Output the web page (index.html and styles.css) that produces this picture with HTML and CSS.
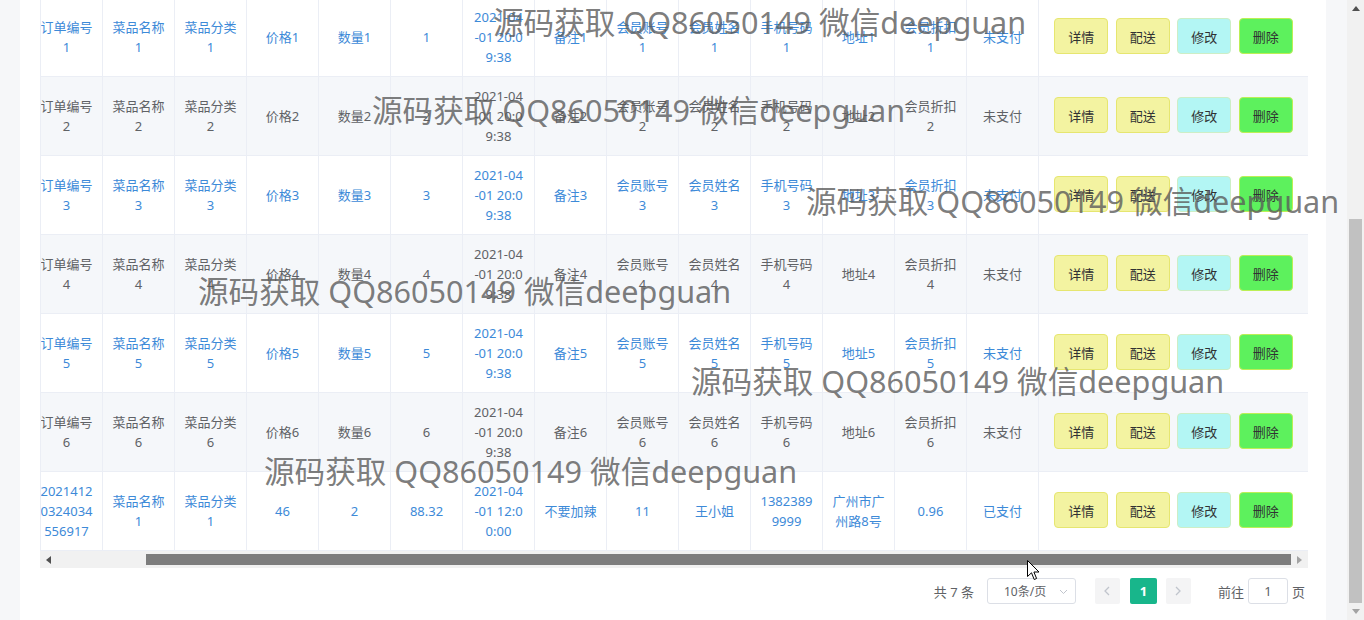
FILE: index.html
```html
<!DOCTYPE html>
<html lang="zh-CN">
<head>
<meta charset="utf-8">
<title>订单管理</title>
<link rel="stylesheet" href="styles.css">
</head>
<body>
<div class="page">
  <div class="main">
    <div class="card">
      <div class="table-clip">
        <div class="table">
          <div class="row link">
            <div class="cell">订单编号1</div><div class="cell">菜品名称1</div><div class="cell">菜品分类1</div><div class="cell">价格1</div><div class="cell">数量1</div><div class="cell">1</div><div class="cell">2021-04-01 20:09:38</div><div class="cell">备注1</div><div class="cell">会员账号1</div><div class="cell">会员姓名1</div><div class="cell">手机号码1</div><div class="cell">地址1</div><div class="cell">会员折扣1</div><div class="cell">未支付</div>
            <div class="cell ops"><button class="btn btn-yellow">详情</button><button class="btn btn-yellow">配送</button><button class="btn btn-cyan">修改</button><button class="btn btn-green">删除</button></div>
          </div>
          <div class="row alt">
            <div class="cell">订单编号2</div><div class="cell">菜品名称2</div><div class="cell">菜品分类2</div><div class="cell">价格2</div><div class="cell">数量2</div><div class="cell">2</div><div class="cell">2021-04-01 20:09:38</div><div class="cell">备注2</div><div class="cell">会员账号2</div><div class="cell">会员姓名2</div><div class="cell">手机号码2</div><div class="cell">地址2</div><div class="cell">会员折扣2</div><div class="cell">未支付</div>
            <div class="cell ops"><button class="btn btn-yellow">详情</button><button class="btn btn-yellow">配送</button><button class="btn btn-cyan">修改</button><button class="btn btn-green">删除</button></div>
          </div>
          <div class="row link">
            <div class="cell">订单编号3</div><div class="cell">菜品名称3</div><div class="cell">菜品分类3</div><div class="cell">价格3</div><div class="cell">数量3</div><div class="cell">3</div><div class="cell">2021-04-01 20:09:38</div><div class="cell">备注3</div><div class="cell">会员账号3</div><div class="cell">会员姓名3</div><div class="cell">手机号码3</div><div class="cell">地址3</div><div class="cell">会员折扣3</div><div class="cell">未支付</div>
            <div class="cell ops"><button class="btn btn-yellow">详情</button><button class="btn btn-yellow">配送</button><button class="btn btn-cyan">修改</button><button class="btn btn-green">删除</button></div>
          </div>
          <div class="row alt">
            <div class="cell">订单编号4</div><div class="cell">菜品名称4</div><div class="cell">菜品分类4</div><div class="cell">价格4</div><div class="cell">数量4</div><div class="cell">4</div><div class="cell">2021-04-01 20:09:38</div><div class="cell">备注4</div><div class="cell">会员账号4</div><div class="cell">会员姓名4</div><div class="cell">手机号码4</div><div class="cell">地址4</div><div class="cell">会员折扣4</div><div class="cell">未支付</div>
            <div class="cell ops"><button class="btn btn-yellow">详情</button><button class="btn btn-yellow">配送</button><button class="btn btn-cyan">修改</button><button class="btn btn-green">删除</button></div>
          </div>
          <div class="row link">
            <div class="cell">订单编号5</div><div class="cell">菜品名称5</div><div class="cell">菜品分类5</div><div class="cell">价格5</div><div class="cell">数量5</div><div class="cell">5</div><div class="cell">2021-04-01 20:09:38</div><div class="cell">备注5</div><div class="cell">会员账号5</div><div class="cell">会员姓名5</div><div class="cell">手机号码5</div><div class="cell">地址5</div><div class="cell">会员折扣5</div><div class="cell">未支付</div>
            <div class="cell ops"><button class="btn btn-yellow">详情</button><button class="btn btn-yellow">配送</button><button class="btn btn-cyan">修改</button><button class="btn btn-green">删除</button></div>
          </div>
          <div class="row alt">
            <div class="cell">订单编号6</div><div class="cell">菜品名称6</div><div class="cell">菜品分类6</div><div class="cell">价格6</div><div class="cell">数量6</div><div class="cell">6</div><div class="cell">2021-04-01 20:09:38</div><div class="cell">备注6</div><div class="cell">会员账号6</div><div class="cell">会员姓名6</div><div class="cell">手机号码6</div><div class="cell">地址6</div><div class="cell">会员折扣6</div><div class="cell">未支付</div>
            <div class="cell ops"><button class="btn btn-yellow">详情</button><button class="btn btn-yellow">配送</button><button class="btn btn-cyan">修改</button><button class="btn btn-green">删除</button></div>
          </div>
          <div class="row link">
            <div class="cell">20214120324034556917</div><div class="cell">菜品名称1</div><div class="cell">菜品分类1</div><div class="cell">46</div><div class="cell">2</div><div class="cell">88.32</div><div class="cell">2021-04-01 12:00:00</div><div class="cell">不要加辣</div><div class="cell">11</div><div class="cell">王小姐</div><div class="cell">13823899999</div><div class="cell">广州市广州路8号</div><div class="cell">0.96</div><div class="cell">已支付</div>
            <div class="cell ops"><button class="btn btn-yellow">详情</button><button class="btn btn-yellow">配送</button><button class="btn btn-cyan">修改</button><button class="btn btn-green">删除</button></div>
          </div>
        </div>
      </div>
      <div class="hscroll">
        <span class="sb-btn"><svg width="5" height="8" viewBox="0 0 5 8"><polygon points="5,0 5,8 0,4" fill="#505050"/></svg></span>
        <span class="h-thumb" style="width:1145px"></span>
        <span class="sb-btn"><svg width="5" height="8" viewBox="0 0 5 8"><polygon points="0,0 0,8 5,4" fill="#a3a3a3"/></svg></span>
      </div>
      <div class="pagination">
        <span class="total">共 7 条</span>
        <span class="sizes">10条/页<svg class="sel-arrow" width="9" height="6" viewBox="0 0 9 6"><polyline points="1,1 4.5,4.5 8,1" fill="none" stroke="#c0c4cc" stroke-width="1"/></svg></span>
        <span class="pbtn"><svg width="6" height="10" viewBox="0 0 6 10"><polyline points="5,1 1,5 5,9" fill="none" stroke="#c0c4cc" stroke-width="1.3"/></svg></span>
        <span class="pager active">1</span>
        <span class="pbtn"><svg width="6" height="10" viewBox="0 0 6 10"><polyline points="1,1 5,5 1,9" fill="none" stroke="#c0c4cc" stroke-width="1.3"/></svg></span>
        <span class="jump">前往</span>
        <span class="jump-input">1</span>
        <span class="jump-tail">页</span>
      </div>
    </div>
  </div>
  <div class="vscroll">
    <span class="v-btn"><svg width="8" height="5" viewBox="0 0 8 5"><polygon points="0,5 8,5 4,0" fill="#505050"/></svg></span>
    <span class="v-thumb" style="height:384px"></span>
    <span class="v-btn"><svg width="8" height="5" viewBox="0 0 8 5"><polygon points="0,0 8,0 4,5" fill="#a3a3a3"/></svg></span>
  </div>

  <div class="wm wm1">源码获取 QQ86050149 微信deepguan</div>
  <div class="wm wm2">源码获取 QQ86050149 微信deepguan</div>
  <div class="wm wm3">源码获取 QQ86050149 微信deepguan</div>
  <div class="wm wm4">源码获取 QQ86050149 微信deepguan</div>
  <div class="wm wm5">源码获取 QQ86050149 微信deepguan</div>
  <div class="wm wm6">源码获取 QQ86050149 微信deepguan</div>

  <svg class="cursor" width="13" height="21" viewBox="0 0 13 21"><path d="M0.5 0.5 L0.5 16.5 L4.5 12.8 L7.2 19.5 L9.6 18.5 L6.9 12 L12 12 Z" fill="#fff" stroke="#000" stroke-width="1" stroke-linejoin="round"/></svg>
</div>
</body>
</html>
```
FILE: styles.css
```css
html, body {
  margin: 0;
  padding: 0;
}

body {
  overflow: hidden;
  font-family: "Noto Sans", "Noto Sans CJK SC", sans-serif;
  background: #f6f7f9;
}

.page {
  position: relative;
  display: flex;
  width: 1364px;
  height: 620px;
  overflow: hidden;
}

.main {
  flex: 1;
  display: flex;
  background: #f6f7f9;
  padding: 0 21px 0 20px;
}

.card {
  flex: 1;
  background: #ffffff;
  padding: 0 18px 0 20px;
}

/* table, scrolled horizontally to the end and vertically below its header */
.table-clip {
  margin-top: -2px;
  border-left: 1px solid #ebeef5;
  overflow: hidden;
}

.table {
  width: 1277px;
  margin-left: -10px;
}

.row {
  display: grid;
  grid-template-columns: repeat(14, 72px) 269px;
  height: 79px;
  box-sizing: border-box;
  border-bottom: 1px solid #ebeef5;
  color: #606266;
  background: #ffffff;
}

.row.alt {
  background: #f5f7fa;
}

.row.link {
  color: #3d8ad8;
}

.cell {
  display: flex;
  align-items: center;
  justify-content: center;
  min-width: 0;
  box-sizing: border-box;
  padding: 0 9.25px;
  border-right: 1px solid #ebeef5;
  font-size: 13px;
  line-height: 20px;
  text-align: center;
  word-break: break-all;
}

.cell.ops {
  border-right: none;
  padding: 0 0 2px 0;
  gap: 7.5px;
}

.btn {
  width: 54px;
  height: 36px;
  box-sizing: border-box;
  padding: 0;
  border: 1px solid;
  border-radius: 4px;
  font-family: "Noto Sans", "Noto Sans CJK SC", sans-serif;
  font-size: 13px;
  color: #303133;
}

.btn-yellow {
  background: #f3f3a1;
  border-color: #e6e670;
}

.btn-cyan {
  background: #b3f6f4;
  border-color: #cdeec6;
}

.btn-green {
  background: #5df15d;
  border-color: #bcef55;
}

/* horizontal scrollbar of the table */
.hscroll {
  display: flex;
  align-items: center;
  height: 17px;
  background: #f1f1f1;
}

.sb-btn {
  width: 17px;
  height: 17px;
  display: flex;
  align-items: center;
  justify-content: center;
  flex: none;
}

.h-thumb {
  margin-left: auto;
  height: 11px;
  background: #7d7d7d;
}

/* pagination */
.pagination {
  display: flex;
  justify-content: flex-end;
  align-items: center;
  height: 26px;
  margin-top: 10px;
  padding-right: 3px;
  font-size: 13px;
  color: #606266;
}

.total {
  margin-right: 13px;
}

.sizes {
  position: relative;
  width: 89px;
  height: 26px;
  box-sizing: border-box;
  border: 1px solid #dcdfe6;
  border-radius: 3px;
  display: flex;
  align-items: center;
  padding-left: 16px;
  font-size: 12px;
  color: #606266;
  margin-right: 19px;
}

.sel-arrow {
  position: absolute;
  right: 7px;
  top: 10px;
}

.pbtn {
  width: 25px;
  height: 26px;
  background: #f4f4f5;
  border-radius: 2px;
  display: flex;
  align-items: center;
  justify-content: center;
}

.pager {
  width: 27px;
  height: 26px;
  border-radius: 2px;
  display: flex;
  align-items: center;
  justify-content: center;
  margin: 0 9px 0 10px;
  font-weight: 700;
}

.pager.active {
  background: #18b68b;
  color: #ffffff;
}

.jump {
  margin-left: 27px;
}

.jump-input {
  width: 40px;
  height: 26px;
  box-sizing: border-box;
  margin-left: 4px;
  border: 1px solid #dcdfe6;
  border-radius: 3px;
  display: flex;
  align-items: center;
  justify-content: center;
  color: #606266;
}

.jump-tail {
  margin-left: 4px;
}

/* window scrollbar */
.vscroll {
  width: 17px;
  flex: none;
  display: flex;
  flex-direction: column;
  align-items: center;
  background: #f1f1f1;
}

.v-btn {
  width: 17px;
  height: 17px;
  flex: none;
  display: flex;
  align-items: center;
  justify-content: center;
}

.v-thumb {
  margin-top: auto;
  width: 13px;
  background: #c1c1c1;
}

/* watermark overlay */
.wm {
  position: absolute;
  white-space: nowrap;
  font-family: "Noto Sans", "Noto Sans CJK SC", sans-serif;
  font-size: 30.6px;
  line-height: 30px;
  color: rgba(90, 90, 90, 0.8);
  pointer-events: none;
}

.wm1 { left: 493px; top: 7px; }
.wm2 { left: 372px; top: 95px; }
.wm3 { left: 806px; top: 186px; }
.wm4 { left: 198px; top: 276px; }
.wm5 { left: 691px; top: 366px; }
.wm6 { left: 264px; top: 456px; }

.cursor {
  position: absolute;
  left: 1027px;
  top: 560px;
}
```
